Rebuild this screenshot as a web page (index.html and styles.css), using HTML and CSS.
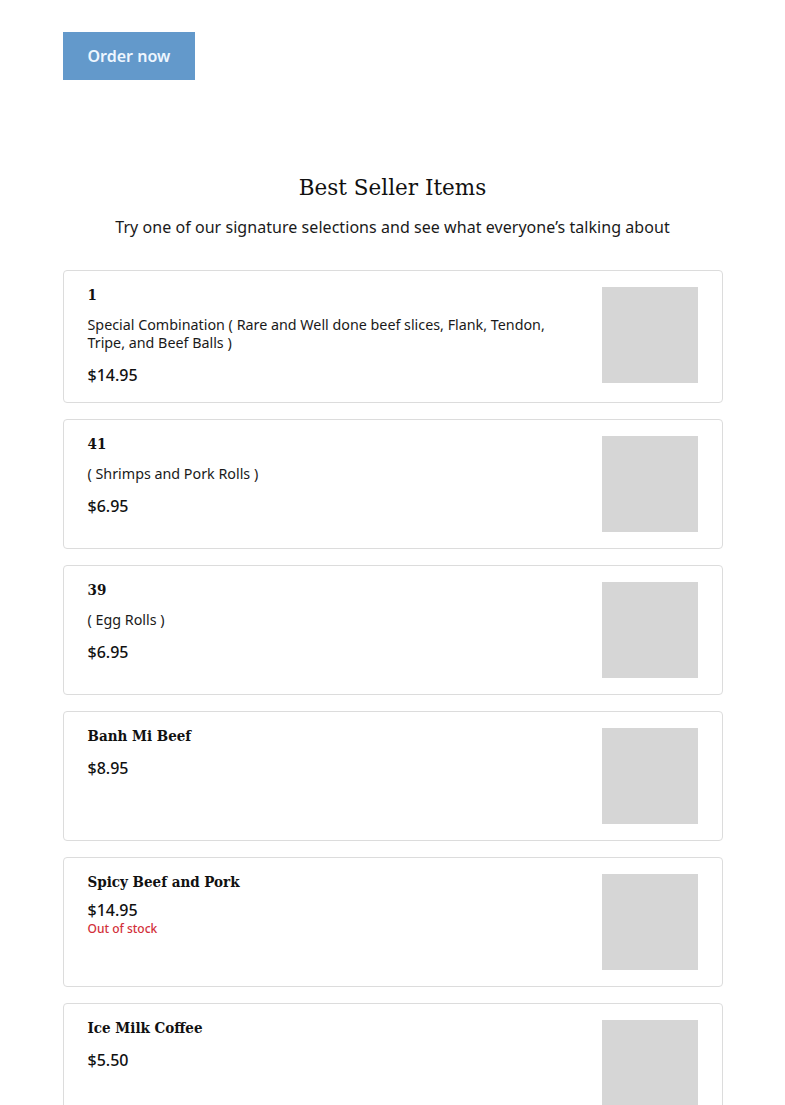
FILE: index.html
```html
<!DOCTYPE html>
<html lang="en">
<head>
<meta charset="utf-8">
<title>Best Seller Items</title>
<link rel="stylesheet" href="styles.css">
</head>
<body>
<main class="page">
  <div class="hero">
    <a class="btn-order" href="#">Order now</a>
  </div>
  <section class="best">
    <h2 class="best-title">Best Seller Items</h2>
    <p class="best-sub">Try one of our signature selections and see what everyone’s talking about</p>
    <div class="items">
      <div class="card">
        <div class="info">
          <h3 class="name">1</h3>
          <p class="desc">Special Combination ( Rare and Well done beef slices, Flank, Tendon, Tripe, and Beef Balls )</p>
          <div class="price">$14.95</div>
        </div>
        <div class="thumb"></div>
      </div>
      <div class="card">
        <div class="info">
          <h3 class="name">41</h3>
          <p class="desc">( Shrimps and Pork Rolls )</p>
          <div class="price">$6.95</div>
        </div>
        <div class="thumb"></div>
      </div>
      <div class="card">
        <div class="info">
          <h3 class="name">39</h3>
          <p class="desc">( Egg Rolls )</p>
          <div class="price">$6.95</div>
        </div>
        <div class="thumb"></div>
      </div>
      <div class="card">
        <div class="info">
          <h3 class="name">Banh Mi Beef</h3>
          <div class="price">$8.95</div>
        </div>
        <div class="thumb"></div>
      </div>
      <div class="card">
        <div class="info">
          <h3 class="name">Spicy Beef and Pork</h3>
          <div class="price price-tight">$14.95</div>
          <div class="stock">Out of stock</div>
        </div>
        <div class="thumb"></div>
      </div>
      <div class="card">
        <div class="info">
          <h3 class="name">Ice Milk Coffee</h3>
          <div class="price">$5.50</div>
        </div>
        <div class="thumb"></div>
      </div>
    </div>
  </section>
</main>
</body>
</html>
```
FILE: styles.css
```css
* { box-sizing: border-box; }
html, body { margin: 0; padding: 0; background: #fff; }
body {
  font-family: "Noto Sans", "Open Sans", sans-serif;
  color: #1a1a1a;
}
.page {
  width: 660px;
  margin: 0 auto;
  padding-top: 32px;
}
.hero { display: flex; }
.btn-order {
  display: inline-block;
  background: #6399cb;
  color: #eef6ff;
  text-decoration: none;
  font-size: 16px;
  font-weight: 600;
  line-height: 48px;
  height: 48px;
  padding: 0 25px;
}
.best { padding-top: 92px; }
.best-title {
  margin: 0;
  text-align: center;
  font-family: "DejaVu Serif", "Liberation Serif", serif;
  font-weight: 400;
  font-size: 21.5px;
  line-height: 32px;
  color: #111;
}
.best-sub {
  margin: 11px 0 0;
  text-align: center;
  font-size: 16px;
  line-height: 24px;
  letter-spacing: 0.05px;
  color: #1a1a1a;
}
.items {
  margin-top: 31px;
  display: flex;
  flex-direction: column;
  gap: 16px;
}
.card {
  display: flex;
  gap: 24px;
  border: 1px solid #dcdcdc;
  border-radius: 4px;
  padding: 16px 24px;
}
.info { flex: 1; min-width: 0; }
.name {
  margin: 0 0 13px;
  font-family: "DejaVu Serif", "Liberation Serif", serif;
  font-stretch: condensed;
  font-weight: 700;
  font-size: 15px;
  line-height: 16px;
  color: #111;
}
.desc {
  margin: 0 0 12px;
  font-size: 14.3px;
  line-height: 18px;
  color: #1a1a1a;
}
.price {
  font-size: 16px;
  line-height: 22px;
  font-weight: 500;
  color: #111;
}
.price-tight { margin-top: -4px; }
.stock {
  font-size: 12px;
  line-height: 16px;
  font-weight: 500;
  color: #d2303a;
}
.thumb {
  flex: 0 0 96px;
  width: 96px;
  height: 96px;
  background: #d6d6d6;
}
```
